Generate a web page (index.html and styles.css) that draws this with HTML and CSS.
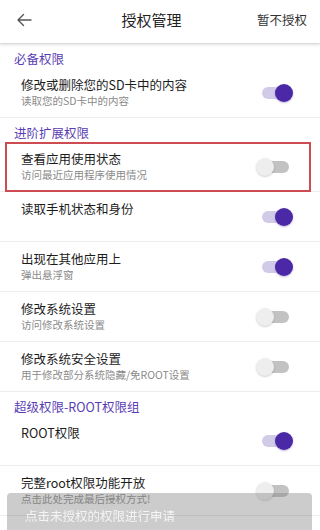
FILE: index.html
```html
<!DOCTYPE html>
<html lang="zh-CN">
<head>
<meta charset="utf-8">
<title>授权管理</title>
<link rel="stylesheet" href="styles.css">
</head>
<body>
<header class="topbar">
  <svg class="back" width="16" height="14" viewBox="0 0 16 14" aria-hidden="true">
    <path d="M15 7H2M7.5 1.5L2 7l5.5 5.5" fill="none" stroke="#555" stroke-width="1.4" stroke-linecap="round" stroke-linejoin="round"/>
  </svg>
  <div class="title">授权管理</div>
  <div class="action">暂不授权</div>
</header>
<main class="list">
  <div class="section">必备权限</div>
  <div class="row">
    <div class="text"><div class="t">修改或删除您的SD卡中的内容</div><div class="s">读取您的SD卡中的内容</div></div>
    <span class="switch on"></span>
  </div>
  <div class="section">进阶扩展权限</div>
  <div class="row marked">
    <div class="text"><div class="t">查看应用使用状态</div><div class="s">访问最近应用程序使用情况</div></div>
    <span class="switch"></span>
  </div>
  <div class="row">
    <div class="text"><div class="t">读取手机状态和身份</div><div class="s"></div></div>
    <span class="switch on"></span>
  </div>
  <div class="row">
    <div class="text"><div class="t">出现在其他应用上</div><div class="s">弹出悬浮窗</div></div>
    <span class="switch on"></span>
  </div>
  <div class="row">
    <div class="text"><div class="t">修改系统设置</div><div class="s">访问修改系统设置</div></div>
    <span class="switch"></span>
  </div>
  <div class="row">
    <div class="text"><div class="t">修改系统安全设置</div><div class="s">用于修改部分系统隐藏/免ROOT设置</div></div>
    <span class="switch"></span>
  </div>
  <div class="section">超级权限-ROOT权限组</div>
  <div class="row">
    <div class="text"><div class="t">ROOT权限</div><div class="s"></div></div>
    <span class="switch on"></span>
  </div>
  <div class="row">
    <div class="text"><div class="t">完整root权限功能开放</div><div class="s">点击此处完成最后授权方式!</div></div>
    <span class="switch"></span>
  </div>
</main>
<div class="toast">点击未授权的权限进行申请</div>
</body>
</html>
```
FILE: styles.css
```css
html, body {
  margin: 0;
  padding: 0;
  background: #fff;
}
body {
  width: 320px;
  height: 530px;
  overflow: hidden;
  font-family: "Noto Sans CJK SC", "Noto Sans", sans-serif;
  color: #222;
}
.topbar {
  height: 43px;
  display: flex;
  align-items: center;
  position: relative;
  border-bottom: 1px solid #dcdcdc;
  box-shadow: 0 1px 3px rgba(0, 0, 0, 0.12);
  background: #fff;
  z-index: 1;
}
.back {
  margin-left: 16px;
  margin-top: -4px;
}
.title {
  flex: 1;
  text-align: center;
  font-size: 15px;
  color: #222;
  margin-top: -4px;
  padding-left: 14px;
}
.action {
  font-size: 12.5px;
  color: #333;
  margin-right: 13px;
  margin-top: -4px;
}
.list {
  display: flex;
  flex-direction: column;
}
.section {
  height: 24px;
  box-sizing: border-box;
  padding: 6px 0 0 14px;
  line-height: 18px;
  font-size: 12.5px;
  color: #5a3db3;
}
.row {
  display: flex;
  align-items: center;
  box-sizing: border-box;
  height: 50px;
  padding: 8px 27px 8px 21px;
  border-bottom: 1px solid #ececec;
  position: relative;
}
.row.marked::after {
  content: "";
  position: absolute;
  left: 5px;
  right: 9px;
  top: 0;
  bottom: -1px;
  border: 2px solid #cc4c52;
}
.text {
  flex: 1;
  align-self: stretch;
  display: flex;
  flex-direction: column;
}
.t {
  font-size: 12.5px;
  line-height: 18px;
  height: 18px;
  color: #1c1c1c;
  white-space: nowrap;
}
.s {
  font-size: 10.5px;
  line-height: 14px;
  height: 15px;
  color: #8a8a8a;
  white-space: nowrap;
}
.switch {
  width: 37px;
  height: 18px;
  position: relative;
  flex: none;
}
.switch::before {
  content: "";
  position: absolute;
  left: 6px;
  width: 27px;
  top: 3px;
  height: 12px;
  border-radius: 6px;
  background: #c2c2c2;
}
.switch::after {
  content: "";
  position: absolute;
  left: 0;
  top: 0;
  width: 18px;
  height: 18px;
  border-radius: 50%;
  background: #eeeeee;
  box-shadow: 0 1px 2px rgba(0, 0, 0, 0.18);
}
.switch.on::before {
  background: #d2cbe8;
}
.switch.on::after {
  left: 19px;
  background: #4a28a6;
  box-shadow: 0 1px 2px rgba(60, 30, 140, 0.3);
}
.toast {
  position: fixed;
  left: 7px;
  right: 8px;
  top: 493px;
  bottom: 0;
  box-sizing: border-box;
  padding: 15px 0 0 18px;
  border-radius: 4px 4px 0 0;
  background: rgba(128, 128, 128, 0.4);
  color: #f4f4f4;
  font-size: 12.5px;
  line-height: 16px;
  z-index: 2;
}
```
